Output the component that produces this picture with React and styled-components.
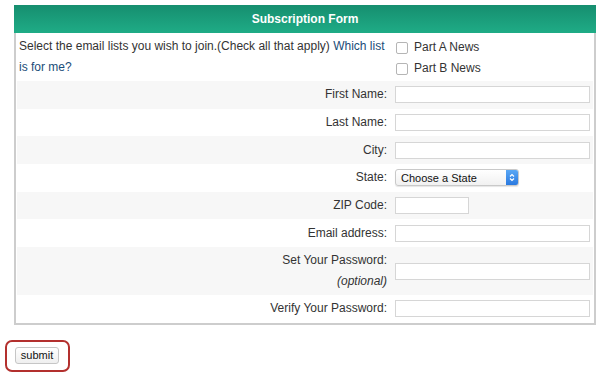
import React from 'react'
import styled, { createGlobalStyle } from 'styled-components'

const GlobalStyle = createGlobalStyle`
    body {
        margin: 0;
        background: #fff;
        font-family: Arial, 'Liberation Sans', Helvetica, sans-serif;
        color: #333;
    }
`

const Page = styled.div`
    padding: 5px 0 0 5px;
    width: 600px;
    height: 374px;
    box-sizing: border-box;
`

const FormBox = styled.div`
    margin-left: 9px;
    width: 582px;
    box-sizing: border-box;
    border: 2px solid #cdcdcd;
    border-top: none;
`

const Header = styled.div`
    height: 28px;
    margin: 0 -2px;
    display: flex;
    align-items: center;
    justify-content: center;
    background: linear-gradient(to bottom, #168e6f, #1fac86);
    color: #fff;
    font-weight: bold;
    font-size: 12px;
`

const Row = styled.div`
    display: grid;
    grid-template-columns: 375px 1fr;
    min-height: ${({ tall }) => (tall ? '48px' : '27.7px')};
    margin: 0 1px;
    background: ${({ shaded }) => (shaded ? '#f7f7f7' : '#fff')};
`

const Intro = styled.div`
    padding: 3px 0 0 2px;
    font-size: 12px;
    line-height: 21px;
    color: #333;
`

const Link = styled.a`
    color: #1a4c78;
    text-decoration: none;
`

const Label = styled.div`
    display: flex;
    flex-direction: column;
    justify-content: center;
    align-items: flex-end;
    padding-right: 5px;
    font-size: 12px;
    line-height: 21px;
    color: #333;
`

const Optional = styled.span`
    font-style: italic;
`

const Field = styled.div`
    display: flex;
    align-items: center;
    padding-left: 3px;
`

const Checks = styled.div`
    padding: 4px 0 0 4px;
    display: flex;
    flex-direction: column;
`

const CheckRow = styled.label`
    display: flex;
    align-items: center;
    gap: 6px;
    font-size: 12px;
    line-height: 21px;
    color: #333;
`

const Box = styled.span`
    width: 10px;
    height: 10px;
    border: 1px solid #b5b5b5;
    border-radius: 2px;
    background: #fff;
`

const TextInput = styled.div`
    width: ${({ w }) => w || '195px'};
    height: 17px;
    box-sizing: border-box;
    border: 1px solid #d6d6d6;
    background: #fff;
`

const Select = styled.div`
    width: 124px;
    height: 17px;
    box-sizing: border-box;
    display: flex;
    align-items: center;
    justify-content: space-between;
    border: 1px solid #c9c9c9;
    border-radius: 3px;
    background: linear-gradient(to bottom, #fff, #f1f1f1);
    font-size: 11px;
    color: #111;
    padding-left: 5px;
    box-shadow: 0 1px 1px rgba(0, 0, 0, 0.1);
`

const Stepper = styled.span`
    width: 12px;
    height: 15px;
    border-radius: 0 2px 2px 0;
    background: linear-gradient(to bottom, #5aa8f5, #2a79e0);
    display: flex;
    align-items: center;
    justify-content: center;
`

const SubmitArea = styled.div`
    display: inline-block;
    margin-top: 15px;
    border: 2px solid #b3302e;
    border-radius: 7px;
    padding: 5px 9px 6px 8px;
`

const SubmitButton = styled.button`
    width: 44px;
    height: 17px;
    padding: 0;
    border: 1px solid #c6c6c6;
    border-radius: 3px;
    background: linear-gradient(to bottom, #fff, #efefef);
    font-family: Arial, 'Liberation Sans', sans-serif;
    font-size: 11px;
    color: #111;
    display: block;
`

const fields = [
    { label: 'First Name:' },
    { label: 'Last Name:' },
    { label: 'City:' },
    { label: 'State:', select: true },
    { label: 'ZIP Code:', w: '74px' },
    { label: 'Email address:' },
    { label: 'Set Your Password:', optional: true },
    { label: 'Verify Your Password:' },
]

export default function App() {
    return (
        <Page>
            <GlobalStyle />
            <FormBox>
                <Header>Subscription Form</Header>
                <Row tall>
                    <Intro>
                        Select the email lists you wish to join.(Check all that apply) <Link>Which list</Link> <Link>is for me?</Link>
                    </Intro>
                    <Checks>
                        <CheckRow><Box />Part A News</CheckRow>
                        <CheckRow><Box />Part B News</CheckRow>
                    </Checks>
                </Row>
                {fields.map((f, i) => (
                    <Row key={f.label} shaded={i % 2 === 0} tall={f.optional}>
                        <Label>
                            <span>{f.label}</span>
                            {f.optional && <Optional>(optional)</Optional>}
                        </Label>
                        <Field>
                            {f.select ? (
                                <Select>
                                    Choose a State
                                    <Stepper>
                                        <svg width="6" height="9" viewBox="0 0 6 9" fill="none" stroke="#fff" strokeWidth="1.2">
                                            <path d="M1 3.5 L3 1.5 L5 3.5" />
                                            <path d="M1 5.5 L3 7.5 L5 5.5" />
                                        </svg>
                                    </Stepper>
                                </Select>
                            ) : (
                                <TextInput w={f.w} />
                            )}
                        </Field>
                    </Row>
                ))}
            </FormBox>
            <SubmitArea>
                <SubmitButton>submit</SubmitButton>
            </SubmitArea>
        </Page>
    )
}
